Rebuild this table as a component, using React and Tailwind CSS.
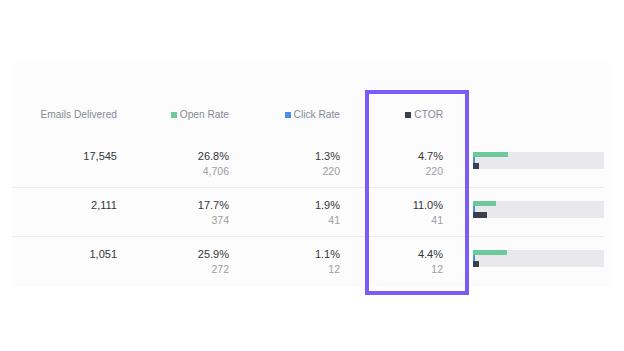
import React from 'react';

const rows = [
    { delivered: '17,545', open: '26.8%', opens: '4,706', click: '1.3%', clicks: '220', ctor: '4.7%', ctors: '220', o: 26.8, c: 1.3, t: 4.7 },
    { delivered: '2,111', open: '17.7%', opens: '374', click: '1.9%', clicks: '41', ctor: '11.0%', ctors: '41', o: 17.7, c: 1.9, t: 11.0 },
    { delivered: '1,051', open: '25.9%', opens: '272', click: '1.1%', clicks: '12', ctor: '4.4%', ctors: '12', o: 25.9, c: 1.1, t: 4.4 },
];

function Cell({ main, sub, width }) {
    return (
        <div className={`${width} flex flex-col items-end`}>
            <span className="text-[11px] leading-[15px] text-[#35363b]">{main}</span>
            <span className="text-[10.5px] leading-[15px] text-[#9b9ca3]">{sub}</span>
        </div>
    );
}

function Bars({ o, c, t }) {
    return (
        <div className="w-[131px] h-[17px] bg-[#e9e9ed] mt-[3px] flex flex-col">
            <div className="h-[5px] bg-[#6cc99b]" style={{ width: `${o}%` }} />
            <div className="h-[6px] bg-[#4a8fe3]" style={{ width: `${Math.max(c, 1.2)}%` }} />
            <div className="h-[6px] bg-[#3a3f4d]" style={{ width: `${t}%` }} />
        </div>
    );
}

export default function App() {
    return (
        <div className="w-[624px] h-[351px] bg-white pt-[63px] pl-[12px] relative" style={{ fontFamily: '"Liberation Sans", Arial, sans-serif' }}>
            <div className="w-[600px] h-[224px] bg-[#fcfcfd]">
                <div className="h-[76px] flex items-end pb-[17px] text-[10.2px] leading-[14px] text-[#878b95]">
                    <div className="w-[105px] text-right">Emails Delivered</div>
                    <div className="w-[112px] flex items-center justify-end gap-[3px]">
                        <span className="w-[6px] h-[6px] bg-[#6cc99b]" />Open Rate
                    </div>
                    <div className="w-[111px] flex items-center justify-end gap-[3px]">
                        <span className="w-[6px] h-[6px] bg-[#4a8fe3]" />Click Rate
                    </div>
                    <div className="w-[103px] flex items-center justify-end gap-[3px]">
                        <span className="w-[6px] h-[6px] bg-[#3a3f4d]" />CTOR
                    </div>
                </div>
                {rows.map((r, i) => (
                    <div key={i} className={`h-[49px] mr-[8px] flex items-start pt-[10px] ${i < 2 ? 'border-b border-[#ececef]' : ''}`}>
                        <div className="w-[105px] text-right text-[11px] leading-[15px] text-[#35363b]">{r.delivered}</div>
                        <Cell main={r.open} sub={r.opens} width="w-[112px]" />
                        <Cell main={r.click} sub={r.clicks} width="w-[111px]" />
                        <Cell main={r.ctor} sub={r.ctors} width="w-[103px]" />
                        <div className="ml-[30px]">
                            <Bars o={r.o} c={r.c} t={r.t} />
                        </div>
                    </div>
                ))}
            </div>
            <div className="absolute left-[365px] top-[90px] w-[104px] h-[205px] border-[4px] border-[#7b5cf6]" />
        </div>
    );
}
